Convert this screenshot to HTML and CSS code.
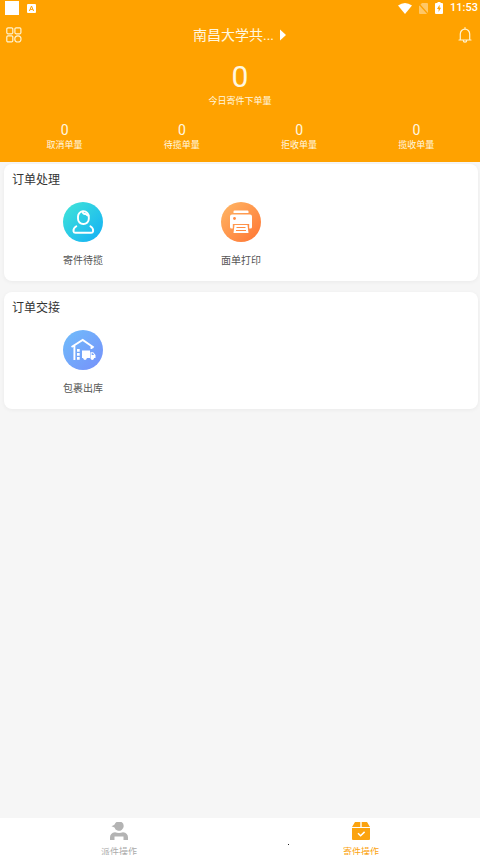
FILE: index.html
```html
<!DOCTYPE html>
<html lang="zh-CN">
<head>
<meta charset="utf-8">
<meta name="viewport" content="width=device-width, initial-scale=1">
<title>寄件操作</title>
<link rel="stylesheet" href="styles.css">
</head>
<body>
<header class="hero">
  <div class="status">
    <div class="status-side">
      <span class="status-block"></span>
      <svg width="9" height="9" viewBox="0 0 9 9"><rect width="9" height="9" rx="1" fill="#fff"/><path d="M2.4 7 4.5 2 6.6 7M3.2 5.4h2.6" fill="none" stroke="#ffa200" stroke-width="1"/></svg>
    </div>
    <div class="status-side status-right">
      <svg width="14" height="11" viewBox="0 0 14 11"><path d="M0 2.6Q7-2.4 14 2.6L7 11Z" fill="#fff"/></svg>
      <svg width="9" height="11" viewBox="0 0 9 11" opacity=".4"><path d="M3 0h5q1 0 1 1v9q0 1-1 1H1q-1 0-1-1V3Z" fill="#fff"/><path d="m0 1 9 10" stroke="#ffa200" stroke-width="1.4"/></svg>
      <svg width="8" height="12" viewBox="0 0 8 12"><path d="M2.500 0h3v1H7q1 0 1 1v9q0 1-1 1H1q-1 0-1-1V2q0-1 1-1h1.500Z" fill="#fff"/><path d="M4.600 2.800 2 7h1.600v3L6 5.800H4.600Z" fill="#ffa200"/></svg>
      <time>11:53</time>
    </div>
  </div>
  <div class="titlebar">
    <button class="icon-button" aria-label="菜单">
      <svg width="16" height="16" viewBox="0 0 16 16" fill="none" stroke="#fff3cf" stroke-width="1.200"><rect x=".8" y=".8" width="6" height="6" rx="1.200"/><rect x="8.900" y=".8" width="6" height="6" rx="1.200"/><rect x=".8" y="8.900" width="6" height="6" rx="1.200"/><circle cx="11.900" cy="11.900" r="3.100"/></svg>
    </button>
    <button class="station">南昌大学共...<svg width="6" height="12" viewBox="0 0 6 12"><path d="m0 .5 6 5.500-6 5.500Z" fill="#fff"/></svg></button>
    <button class="icon-button" aria-label="通知">
      <svg width="16" height="16" viewBox="0 0 16 16" fill="none" stroke="#fff3cf" stroke-width="1.200"><path d="M2 13h12M3.300 13V7a4.700 4.900 0 0 1 9.400 0v6M6.300 13.400a1.700 1.700 0 0 0 3.400 0M8 2V.6" stroke-linecap="round"/></svg>
    </button>
  </div>
  <div class="total"><strong>0</strong><span>今日寄件下单量</span></div>
  <div class="stats">
    <div class="stat"><b>0</b><span>取消单量</span></div>
    <div class="stat"><b>0</b><span>待揽单量</span></div>
    <div class="stat"><b>0</b><span>拒收单量</span></div>
    <div class="stat"><b>0</b><span>揽收单量</span></div>
  </div>
</header>
<main class="content">
  <section class="card">
    <h2>订单处理</h2>
    <div class="services">
      <button class="service">
        <svg width="40" height="40" viewBox="0 0 40 40"><defs><linearGradient id="cyan" x1="0" y1="0" x2="1" y2="1"><stop stop-color="#42e6d7"/><stop offset="1" stop-color="#12aef6"/></linearGradient></defs><circle cx="20" cy="20" r="20" fill="url(#cyan)"/><g fill="none" stroke="#fff" stroke-width="1.900" stroke-linecap="round" stroke-linejoin="round"><rect x="15" y="9.300" width="10.800" height="12.700" rx="5.200"/><path d="M19.500 9.700q.8 3 3.200 2.200 1.500 1.600 2.800 1.800M13.300 24.200c-2 1.200-3.100 3.300-2.800 5.100q.2 1.500 2 1.500h15.600q1.800 0 2-1.500c.3-1.800-.7-3.900-2.700-5.100"/></g></svg>
        <span>寄件待揽</span>
      </button>
      <button class="service">
        <svg width="40" height="40" viewBox="0 0 40 40"><defs><linearGradient id="orange" x1="0" y1="0" x2="1" y2="1"><stop stop-color="#ffb866"/><stop offset="1" stop-color="#ff7433"/></linearGradient></defs><circle cx="20" cy="20" r="20" fill="url(#orange)"/><path d="M13.500 8.500h13q1 0 1 1V11h-15V9.500q0-1 1-1ZM11 12.500h18q2 0 2 2V25q0 1.500-1.500 1.500h-1.300V22H11.800v4.500h-1.300Q9 26.500 9 25V14.500q0-2 2-2Z" fill="#fff"/><circle cx="13.500" cy="16.500" r="1.400" fill="#ff8b43"/><path d="M13.500 23h13l1 8h-15Z" fill="#fff"/><path d="M15.500 25.500h9M15 28.500h10" stroke="#ff8b43" stroke-width="1.200"/></svg>
        <span>面单打印</span>
      </button>
    </div>
  </section>
  <section class="card">
    <h2>订单交接</h2>
    <div class="services">
      <button class="service">
        <svg width="40" height="40" viewBox="0 0 40 40"><defs><linearGradient id="blue" x1="0" y1="0" x2="1" y2="1"><stop stop-color="#70bdfb"/><stop offset="1" stop-color="#7690fa"/></linearGradient></defs><circle cx="20" cy="20" r="20" fill="url(#blue)"/><path d="m8.500 17 11.200-7 11 7.500M11.400 15.500V30M28.500 16v3" fill="none" stroke="#fff" stroke-width="1.900"/><path d="M14 19h2.700v2.700H14ZM14 23h2.700v2.700H14ZM14 27h2.700v2.700H14ZM19 20.500h8V28h-8ZM27.500 22.200h2.700l2.300 2.800V28h-5Z" fill="#fff"/><circle cx="22" cy="28.300" r="1.600" fill="#fff"/><circle cx="29.300" cy="28.300" r="1.600" fill="#fff"/><path d="M28.700 23.300h1.200l1.200 1.700h-2.400Z" fill="#759ffa"/></svg>
        <span>包裹出库</span>
      </button>
    </div>
  </section>
</main>
<nav class="tabs">
  <button class="tab">
    <svg width="20" height="18" viewBox="0 0 20 18" fill="#b3b3b3"><path d="M5 3 2.500 4.200l3 1.200a4.700 4.700 0 1 0 .1-3ZM1 18v-2.500q0-4.500 5-5.200 4 1.400 8 0 5 .7 5 5.200V18h-4.500v-3.500h-9V18Z"/></svg>
    <span>派件操作</span>
  </button>
  <button class="tab tab-active">
    <svg width="20" height="18" viewBox="0 0 20 18" fill="#fba30f"><path d="M4 0h5.300v5H1ZM10.700 0H16l3 5h-8.300ZM1 6h18v11q0 1-1 1H2q-1 0-1-1Z"/><path d="m7 11.200 2.600 2.500 4-3.800" fill="none" stroke="#fff" stroke-width="1.500"/></svg>
    <span>寄件操作</span>
  </button>
  <i class="pointer"></i>
</nav>
</body>
</html>
```
FILE: styles.css
```css
* { box-sizing: border-box; }

body {
  margin: 0;
  height: 100vh;
  display: flex;
  flex-direction: column;
  background: #f6f6f6;
  color: #333;
  font-family: Roboto, "Noto Sans CJK SC", sans-serif;
}

svg { display: block; flex: none; }

button {
  padding: 0;
  border: 0;
  background: none;
  color: inherit;
  font: inherit;
}

.hero {
  flex: none;
  padding-bottom: 10px;
  background: #ffa200;
  color: #fff8e0;
}

.status {
  display: flex;
  justify-content: space-between;
  height: 16px;
  padding: 0 2px 0 5px;
}

.status-side {
  display: flex;
  align-items: center;
  gap: 8px;
}

.status-right { gap: 7px; }

.status-block {
  width: 14px;
  height: 14px;
  background: #fff;
}

time {
  font-size: 11px;
  font-weight: 500;
  line-height: 16px;
  color: #fff;
}

.titlebar {
  display: flex;
  align-items: center;
  justify-content: space-between;
  height: 38px;
  padding: 0 7px 0 6px;
}

.icon-button { width: 16px; }

.station {
  display: flex;
  align-items: center;
  gap: 6px;
  font-size: 14px;
  line-height: 20px;
}

.total {
  display: flex;
  flex-direction: column;
  align-items: center;
  padding-top: 6px;
}

.total strong {
  font-size: 30px;
  font-weight: 400;
  line-height: 34px;
}

.total span,
.stat span {
  font-size: 9px;
  line-height: 14px;
}

.stats {
  display: grid;
  grid-template-columns: repeat(4, 1fr);
  padding: 14px 5px 0 6px;
}

.stat {
  display: flex;
  flex-direction: column;
  align-items: center;
}

.stat b {
  font-size: 14px;
  font-weight: 400;
  line-height: 16px;
}

.content {
  flex: 1;
  display: flex;
  flex-direction: column;
  gap: 11px;
  padding: 2px 2px 0 4px;
}

.card {
  padding-bottom: 12px;
  border-radius: 8px;
  background: #fff;
  box-shadow: 0 1px 4px #0000000d;
}

.card h2 {
  margin: 0;
  padding: 6px 8px;
  font-size: 12px;
  font-weight: 400;
  line-height: 20px;
}

.services {
  display: grid;
  grid-template-columns: repeat(3, 1fr);
  padding-top: 6px;
}

.service {
  display: flex;
  flex-direction: column;
  align-items: center;
  gap: 11px;
  font-size: 10px;
  line-height: 16px;
  color: #555;
}

.tabs {
  position: relative;
  flex: none;
  display: grid;
  grid-template-columns: 1fr 1fr;
  column-gap: 4px;
  align-items: start;
  height: 37px;
  overflow: hidden;
  background: #fff;
}

.tab {
  display: flex;
  flex-direction: column;
  align-items: center;
  gap: 4px;
  padding-top: 4px;
  font-size: 9px;
  line-height: 16px;
  color: #aaa;
}

.tab-active { color: #fba30f; }

.pointer {
  position: absolute;
  left: 60%;
  bottom: 10px;
  width: 1px;
  height: 1px;
  background: #222;
}
```
